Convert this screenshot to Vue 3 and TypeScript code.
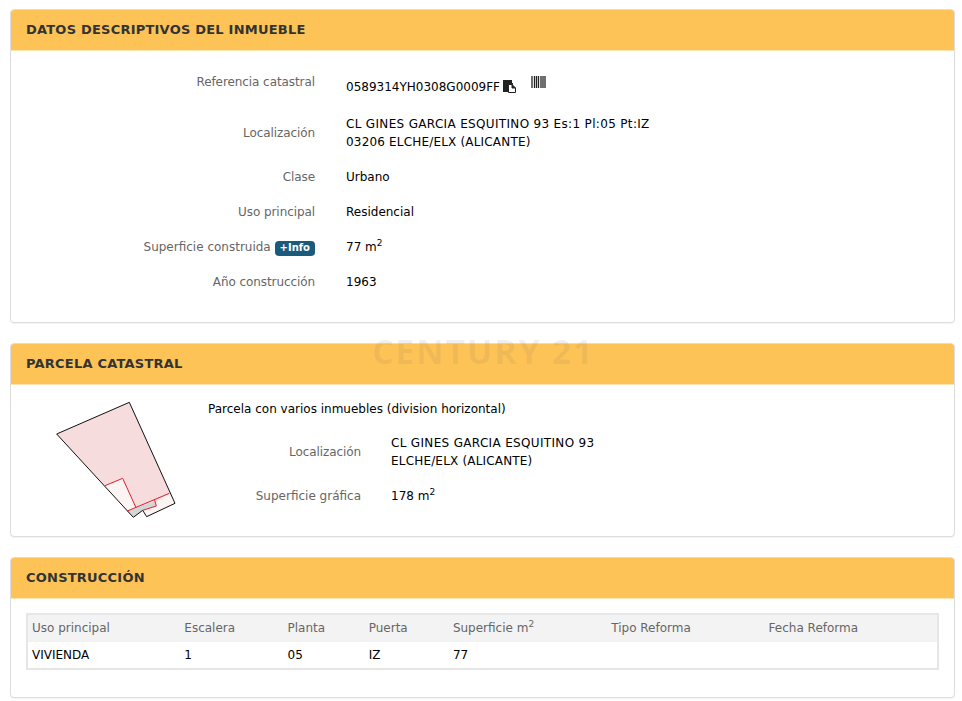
<template>
  <div class="page">
    <div class="watermark">CENTURY 21</div>

    <section class="panel">
      <h2>DATOS DESCRIPTIVOS DEL INMUEBLE</h2>
      <div class="body datos">
        <div class="row ref">
          <label>Referencia catastral</label>
          <div class="value">
            <span class="code">0589314YH0308G0009FF</span>
            <svg class="copy" width="13" height="13" viewBox="0 0 13 13">
              <path d="M0 0h9v3h1v2H6v7H0z" fill="#222" />
              <path d="M5.5 4.5h3.5l3.5 3.5v4.500h-7z" fill="#fff" stroke="#222" />
              <path d="M9 4.500v3.500h3.500" fill="#222" stroke="#222" />
            </svg>
            <svg class="barcode" width="15" height="12" viewBox="0 0 15 12">
              <path d="M1 0v12M3.500 0v12M5.500 0v12M7.500 0v12M10 0v12M12 0v12M14 0v12" stroke="#222" stroke-width="1.300" fill="none" />
            </svg>
          </div>
        </div>
        <div class="row loc">
          <label>Localización</label>
          <div class="value"><span class="wide">CL GINES GARCIA ESQUITINO 93 Es:1 Pl:05 Pt:IZ</span><br /><span class="semi">03206 ELCHE/ELX (ALICANTE)</span></div>
        </div>
        <div class="row"><label>Clase</label><div class="value">Urbano</div></div>
        <div class="row"><label>Uso principal</label><div class="value">Residencial</div></div>
        <div class="row">
          <label class="keep">Superficie construida <span class="badge">+Info</span></label>
          <div class="value">77 m<sup>2</sup></div>
        </div>
        <div class="row"><label>Año construcción</label><div class="value">1963</div></div>
      </div>
    </section>

    <section class="panel">
      <h2>PARCELA CATASTRAL</h2>
      <div class="body parcela">
        <svg class="plano" width="150" height="130" viewBox="0 0 450 390">
          <path d="M268 22 405 325 320 365 310 345 280 367 50 117Z" fill="#f6dcdc" />
          <path d="M195 272 248 250 288 338 262 348Z" fill="#fcf3f3" />
          <path d="M312 345 388 295 405 325 320 365Z" fill="#fcf3f3" />
          <path d="M262 348 345 320 349 333 308 346 280 367Z" fill="#d3d6d6" />
          <path d="M195 272 248 250 288 338M262 348 388 295M343 312 349 333 308 346" fill="none" stroke="#e0202c" stroke-width="3" />
          <path d="M268 22 405 325 320 365 308 346 280 367 50 117Z" fill="none" stroke="#111" stroke-width="3" />
        </svg>
        <div class="info">
          <p class="note">Parcela con varios inmuebles (division horizontal)</p>
          <div class="row loc2">
            <label>Localización</label>
            <div class="value"><span class="wide">CL GINES GARCIA ESQUITINO 93</span><br /><span class="semi">ELCHE/ELX (ALICANTE)</span></div>
          </div>
          <div class="row">
            <label class="keep">Superficie gráfica</label>
            <div class="value">178 m<sup>2</sup></div>
          </div>
        </div>
      </div>
    </section>

    <section class="panel">
      <h2>CONSTRUCCIÓN</h2>
      <div class="body obra">
        <table>
          <colgroup>
            <col v-for="w in widths" :key="w.id" :style="{ width: w.px + 'px' }" />
          </colgroup>
          <thead>
            <tr>
              <th>Uso principal</th>
              <th>Escalera</th>
              <th>Planta</th>
              <th>Puerta</th>
              <th>Superficie m<sup>2</sup></th>
              <th>Tipo Reforma</th>
              <th>Fecha Reforma</th>
            </tr>
          </thead>
          <tbody>
            <tr>
              <td>VIVIENDA</td>
              <td>1</td>
              <td>05</td>
              <td>IZ</td>
              <td>77</td>
              <td></td>
              <td></td>
            </tr>
          </tbody>
        </table>
      </div>
    </section>
  </div>
</template>

<script setup lang="ts">
const widths = [152, 104, 81, 84, 158, 157, 173].map((px, id) => ({ id, px }));
</script>

<style>
html, body { background: #fff; }
</style>

<style scoped>
.page {
  position: relative;
  padding: 9px 7px 0 10px;
  font-family: "DejaVu Sans", Verdana, sans-serif;
  font-size: 12px;
  line-height: 18px;
  color: #000;
}
.watermark {
  position: absolute;
  left: 372px;
  top: 333px;
  font-family: "Open Sans", "DejaVu Sans", sans-serif;
  font-weight: 700;
  font-size: 34px;
  line-height: 36px;
  letter-spacing: 1.700px;
  color: rgba(90, 90, 90, 0.09);
  z-index: 2;
  white-space: nowrap;
}
.panel {
  border: 1px solid #ddd;
  border-radius: 4px;
  background: #fff;
  margin-bottom: 20px;
  box-shadow: 0 1px 1px rgba(0, 0, 0, 0.05);
  overflow: hidden;
}
h2 {
  margin: 0;
  height: 40px;
  padding: 0 15px;
  background: #fec356;
  border-bottom: 1px solid #fde3b0;
  font-size: 13px;
  line-height: 39px;
  font-weight: 700;
  letter-spacing: 0.22px;
  color: #333;
}
.row {
  display: flex;
  align-items: center;
  height: 35px;
}
label {
  width: 304px;
  text-align: right;
  color: #666;
  flex: none;
  letter-spacing: -0.08px;
}
label.keep {
  letter-spacing: 0;
}
.value {
  margin-left: 31px;
}
.wide {
  letter-spacing: 0.33px;
}
.semi {
  letter-spacing: 0.18px;
}
sup {
  font-size: 9px;
  line-height: 0;
}
.datos {
  height: 271px;
  padding-top: 15px;
  box-sizing: border-box;
}
.ref {
  height: 36px;
}
.ref label {
  margin-bottom: 5px;
}
.ref .value {
  display: flex;
  align-items: center;
}
.code {
  margin-top: 5px;
}
.copy {
  margin: 5px 0 0 3px;
}
.barcode {
  margin-left: 15px;
  margin-bottom: 4px;
}
.loc {
  height: 57px;
  padding-top: 4px;
  box-sizing: border-box;
}
.badge {
  display: inline-block;
  background: #1a5a7a;
  color: #fff;
  font-size: 10px;
  font-weight: 700;
  line-height: 14px;
  height: 15px;
  padding: 0 5px;
  border-radius: 4px;
  vertical-align: 0;
}
.parcela {
  display: flex;
  height: 151px;
}
.plano {
  flex: none;
  margin: 10px 0 0 29px;
}
.info {
  margin-left: 18px;
}
.info label {
  width: 153px;
}
.info .value {
  margin-left: 30px;
}
.note {
  margin: 15px 0 0;
}
.loc2 {
  height: 53px;
  margin-top: 7px;
}
.obra {
  height: 98px;
  padding: 14px 15px 0;
  box-sizing: border-box;
}
table {
  width: 913px;
  table-layout: fixed;
  border-collapse: collapse;
  border: 2px solid #e6e6e6;
}
th {
  height: 26px;
  padding: 0 4px;
  background: #f3f3f3;
  text-align: left;
  font-weight: 400;
  color: #666;
}
th:nth-child(2), td:nth-child(2) {
  padding-left: 5px;
}
td {
  height: 26px;
  padding: 0 4px;
  border-top: 1px solid #f2f2f2;
}
</style>
